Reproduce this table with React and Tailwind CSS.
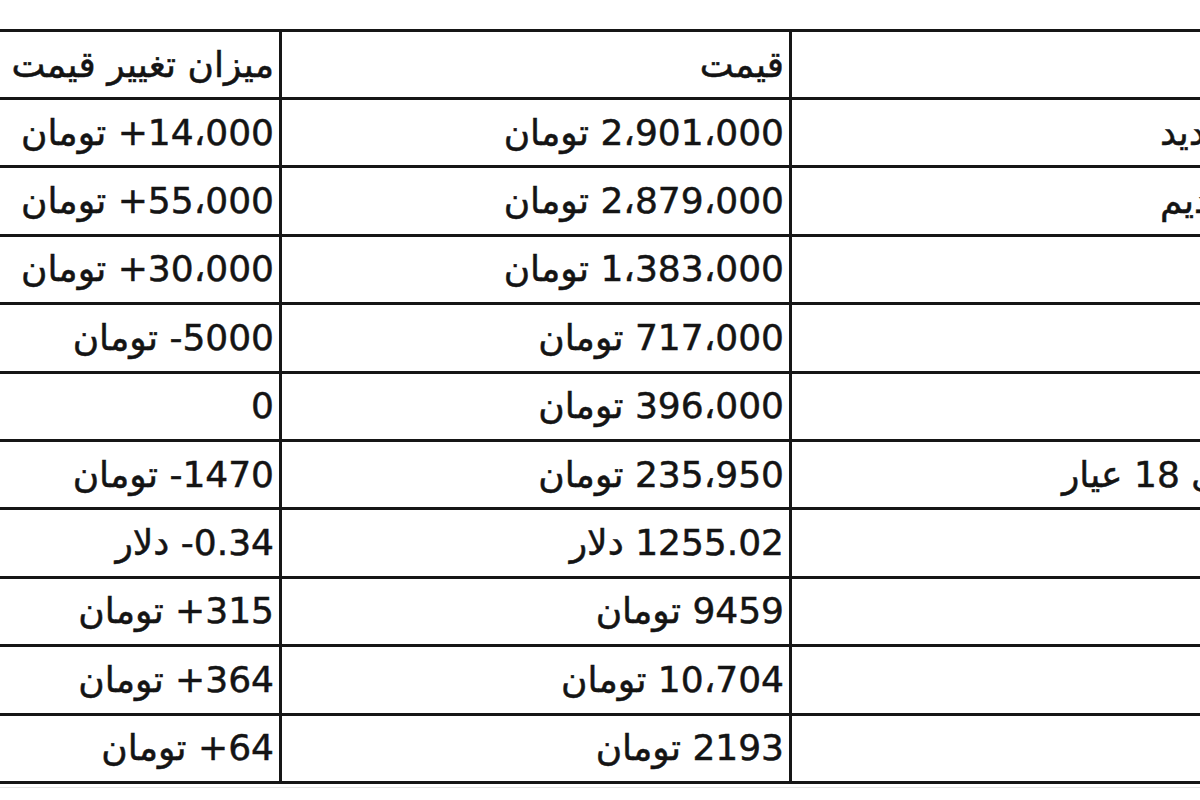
const rows = [
  { name: "سکه طرح جدید", price: "2،901،000 تومان", change: "14،000+ تومان" },
  { name: "سکه طرح قدیم", price: "2،879،000 تومان", change: "55،000+ تومان" },
  { name: "", price: "1،383،000 تومان", change: "30،000+ تومان" },
  { name: "", price: "717،000 تومان", change: "5000- تومان" },
  { name: "", price: "396،000 تومان", change: "0" },
  { name: "یک گرم طلای 18 عیار", price: "235،950 تومان", change: "1470- تومان" },
  { name: "", price: "1255.02 دلار", change: "0.34- دلار" },
  { name: "", price: "9459 تومان", change: "315+ تومان" },
  { name: "", price: "10،704 تومان", change: "364+ تومان" },
  { name: "", price: "2193 تومان", change: "64+ تومان" },
];

function Cell({ children, className = "" }) {
  return (
    <div
      dir="rtl"
      className={`flex items-center justify-start pr-[5px] whitespace-nowrap overflow-hidden ${className}`}
    >
      {children}
    </div>
  );
}

function Row({ name, price, change, header }) {
  return (
    <div
      className={`flex border-b-[3px] border-[#161616] ${
        header ? "h-[68px]" : "h-[68.4px]"
      }`}
    >
      <Cell className="w-[342px] border-r-[3px] border-[#161616]">{change}</Cell>
      <Cell className="w-[510px] border-r-[3px] border-[#161616]">{price}</Cell>
      <Cell className="w-[607px]">{name}</Cell>
    </div>
  );
}

export default function App() {
  return (
    <div className="w-[1200px] h-[800px] overflow-hidden bg-white pt-[29px]">
      <div
        className="w-[1459px] -ml-[60px] border-t-[3px] border-[#161616] text-[#141414] text-[36px] leading-none [-webkit-text-stroke:0.5px_#141414]"
        style={{ fontFamily: '"DejaVu Sans", sans-serif' }}
      >
        <Row header name="" price="قیمت" change="میزان تغییر قیمت" />
        {rows.map((r, i) => (
          <Row key={i} {...r} />
        ))}
        <div className="h-[4px] border-b border-[#e4e4e4]" />
      </div>
    </div>
  );
}
